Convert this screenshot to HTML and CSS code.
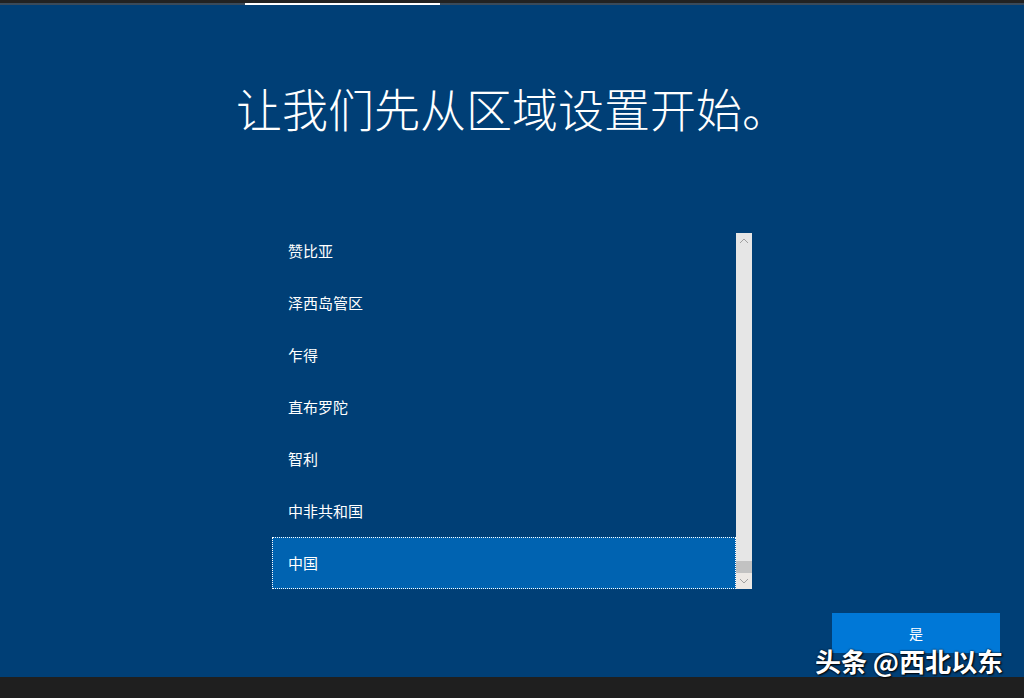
FILE: index.html
```html
<!DOCTYPE html>
<html lang="zh-CN">
<head>
    <meta charset="UTF-8">
    <meta name="viewport" content="width=device-width, initial-scale=1.0">
    <title>区域设置</title>
    <link rel="stylesheet" href="styles.css">
</head>
<body>
    <div class="screen">
        <!-- Setup progress -->
        <div class="topbar"></div>
        <div class="progress"><div class="progress-fill"></div></div>

        <div class="page">
            <h1 class="title">让我们先从区域设置开始。</h1>

            <div class="listbox">
                <div class="list-view">
                    <ul class="list">
                        <li class="item">赞比亚</li>
                        <li class="item">泽西岛管区</li>
                        <li class="item">乍得</li>
                        <li class="item">直布罗陀</li>
                        <li class="item">智利</li>
                        <li class="item">中非共和国</li>
                        <li class="item selected">中国</li>
                    </ul>
                </div>
                <div class="scrollbar">
                    <div class="sb-arrow">
                        <svg width="10" height="6" viewBox="0 0 10 6"><path d="M1 5 L5 1 L9 5" fill="none" stroke="#a0a0a0" stroke-width="1"/></svg>
                    </div>
                    <div class="sb-track"></div>
                    <div class="sb-thumb"></div>
                    <div class="sb-arrow down">
                        <svg width="10" height="6" viewBox="0 0 10 6"><path d="M1 1 L5 5 L9 1" fill="none" stroke="#a0a0a0" stroke-width="1"/></svg>
                    </div>
                </div>
            </div>

            <div class="actions">
                <button class="btn-yes">是</button>
            </div>
        </div>

        <div class="bottombar"></div>

        <div class="watermark">头条 @西北以东</div>
    </div>
</body>
</html>
```

FILE: styles.css
```css
body {
    margin: 0;
    padding: 0;
    background-color: #1f1f1f;
    font-family: "Noto Sans CJK SC", "Noto Sans", sans-serif;
}
.screen {
    position: relative;
    width: 1024px;
    height: 698px;
    display: flex;
    flex-direction: column;
    background-color: #003f76;
    overflow: hidden;
}
.topbar {
    height: 3px;
    background-color: #222222;
}
.progress {
    height: 2px;
    background-color: #3a4a5a;
}
.progress-fill {
    margin-left: 245px;
    width: 195px;
    height: 2px;
    background-color: #ffffff;
}
.page {
    flex: 1;
    display: flex;
    flex-direction: column;
}
.title {
    margin: 72px 0 0;
    color: #ffffff;
    font-size: 46px;
    font-weight: 300;
    line-height: 60px;
    text-align: center;
}
.listbox {
    display: flex;
    width: 480px;
    height: 356px;
    margin: 96px auto 0;
}
.list-view {
    flex: 1;
    overflow: hidden;
}
.list {
    list-style: none;
    margin: -8px 0 0;
    padding: 0;
}
.item {
    height: 52px;
    padding: 0 0 2px 16px;
    box-sizing: border-box;
    display: flex;
    align-items: center;
    color: #ffffff;
    font-size: 15px;
}
.item.selected {
    background-color: #0063b1;
    border: 1px dotted #ffffff;
    padding-left: 15px;
}
.scrollbar {
    width: 16px;
    display: flex;
    flex-direction: column;
    background-color: #e6e6e6;
}
.sb-arrow {
    height: 16px;
    display: flex;
    align-items: center;
    justify-content: center;
}
.sb-arrow.down {
    background-color: #ece8e4;
}
.sb-track {
    flex: 1;
}
.sb-thumb {
    height: 12px;
    background-color: #c2c2c2;
}
.actions {
    display: flex;
    justify-content: flex-end;
    padding: 24px 24px 0;
}
.btn-yes {
    width: 168px;
    height: 40px;
    border: none;
    background-color: #0078d7;
    color: #ffffff;
    font-family: inherit;
    font-size: 14px;
}
.bottombar {
    height: 21px;
    background-color: #1f1f1f;
}
.watermark {
    position: absolute;
    right: 21px;
    top: 644px;
    color: #ffffff;
    font-size: 26px;
    font-weight: bold;
    line-height: 34px;
    text-shadow: 1px 1px 2px #000000, 0 0 2px #000000;
}
```
